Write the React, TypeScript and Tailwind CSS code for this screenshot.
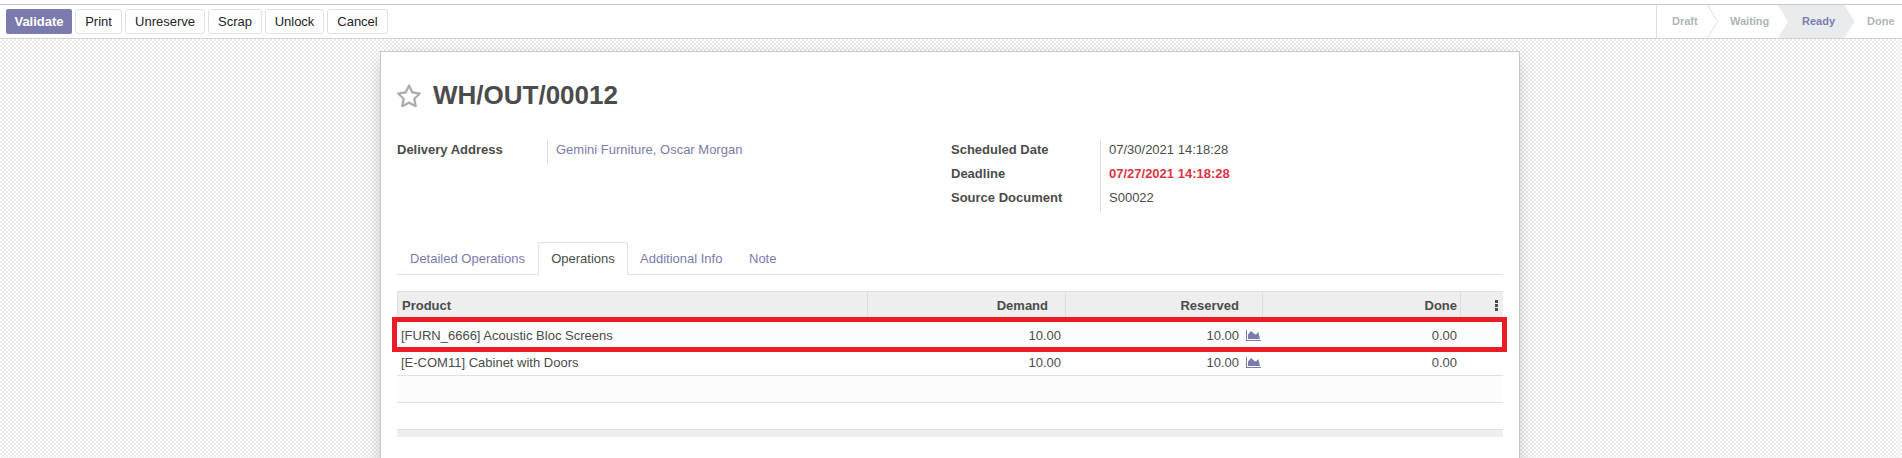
import React from "react";

const buttons = [
  { label: "Print", cls: "w-[47px]" },
  { label: "Unreserve", cls: "w-[80px]" },
  { label: "Scrap", cls: "w-[54px]" },
  { label: "Unlock", cls: "w-[59px]" },
  { label: "Cancel", cls: "w-[61px]" },
];

const rows = [
  { product: "[FURN_6666] Acoustic Bloc Screens", qty: "10.00", done: "0.00" },
  { product: "[E-COM11] Cabinet with Doors", qty: "10.00", done: "0.00" },
];

const columns = "grid grid-cols-[minmax(0,1fr)_198px_197px_198px_42px]";

function Star() {
  return (
    <svg width="24" height="23" viewBox="0 0 1664 1600" fill="#aaaaaa" className="shrink-0">
      <path
        d="M1137 1004l306-297-422-62-189-382-189 382-422 62 306 297-73 421 378-199 377 199zm527-357q0 22-26 48l-363 354 86 500q1 7 1 20 0 50-41 50-19 0-40-12l-449-236-449 236q-22 12-40 12-21 0-31.500-14.500t-10.500-35.500q0-6 2-20l86-500-364-354q-25-27-25-48 0-37 56-46l502-73 225-455q19-41 49-41t49 41l225 455 502 73q56 9 56 46z"
        stroke="#aaaaaa"
        strokeWidth="30"
      />
    </svg>
  );
}

function AreaChart() {
  return (
    <svg width="15" height="11" viewBox="0 0 15 11" className="shrink-0">
      <path d="M0 0h1v10h14v1H0z" fill="#7c7bad" />
      <path d="M2 9V4.500l3-3.500 3.500 3L10 4.500 12.300 2 14 9z" fill="#7c7bad" />
    </svg>
  );
}

function Status() {
  return (
    <div className="relative flex h-[33px] w-[246px] shrink-0 border-l border-[#dee2e6] text-[11px] font-bold leading-[33px] text-[#adb5bd]">
      <svg width="245" height="33" viewBox="0 0 245 33" className="absolute inset-0">
        <path d="M50.500 0L60.500 16.500 50.500 33" fill="none" stroke="#dee2e6" />
        <path d="M121 0H187.500L197.500 16.500 187.500 33H121L131 16.500z" fill="#e9ecef" />
      </svg>
      <span className="relative w-[57px] pl-[15px]">Draft</span>
      <span className="relative w-[72px] pl-4">Waiting</span>
      <span className="relative w-[65px] pl-4 text-[#7c7bad]">Ready</span>
      <span className="relative pl-4">Done</span>
    </div>
  );
}

export default function App() {
  return (
    <div className="flex h-[458px] w-[1902px] flex-col overflow-hidden bg-white font-['Liberation_Sans',Arial,sans-serif] text-[13px] text-[#4c4c4c]">
      <header className="mt-1 flex h-[35px] shrink-0 justify-between border-y border-t-[#c8c8c8] border-b-[#ced4da]">
        <div className="flex gap-[3px] pl-1.5 pt-1 text-[#212529]">
          <button className="h-[25px] w-[66px] rounded-[2px] bg-[#7c7bad] font-bold text-white">Validate</button>
          {buttons.map((b) => (
            <button key={b.label} className={`h-[25px] rounded-[3px] border border-[#dee2e6] bg-white ${b.cls}`}>
              {b.label}
            </button>
          ))}
        </div>
        <Status />
      </header>

      <main className="flex grow justify-center bg-[repeating-conic-gradient(#ececec_0_25%,#ffffff_0_50%)] bg-size-[4px_4px] pt-3 pr-[2px]">
        <section className="h-[440px] w-[1140px] shrink-0 border border-[#c8c8d3] bg-white px-4 shadow-[0_5px_20px_-5px_rgba(0,0,0,0.3)]">
          <div className="flex h-[88px] items-center pb-[2px]">
            <Star />
            <h1 className="ml-3 text-[26px] font-bold leading-8">WH/OUT/00012</h1>
          </div>

          <div className="flex h-[102px]">
            <div className="flex h-6 w-[554px] leading-[19px]">
              <div className="w-[150px] font-bold">Delivery Address</div>
              <div className="border-l border-[#dddddd] pl-2 text-[#7c7bad]">Gemini Furniture, Oscar Morgan</div>
            </div>
            <div className="flex h-[72px]">
              <div className="w-[149px] font-bold">
                <div className="h-6 leading-[19px]">Scheduled Date</div>
                <div className="h-6 leading-[19px]">Deadline</div>
                <div className="h-6 leading-[19px]">Source Document</div>
              </div>
              <div className="border-l border-[#dddddd] pl-2">
                <div className="h-6 leading-[19px]">07/30/2021 14:18:28</div>
                <div className="h-6 font-bold leading-[19px] text-[#dc3545]">07/27/2021 14:18:28</div>
                <div className="h-6 leading-[19px]">S00022</div>
              </div>
            </div>
          </div>

          <nav className="flex h-[33px] border-b border-[#dee2e6] leading-[33px] text-[#7c7bad]">
            <span className="w-[141px] pl-[13px]">Detailed Operations</span>
            <span className="h-[33px] w-[90px] rounded-t-[3px] border border-b-0 border-[#dee2e6] bg-white text-center leading-[31px] text-[#4c4c4c]">
              Operations
            </span>
            <span className="w-[121px] pl-3">Additional Info</span>
            <span>Note</span>
          </nav>

          <div className="relative mt-4">
            <div className={`${columns} h-[29px] border-t border-l border-[#dee2e6] bg-[#eeeeee] font-bold leading-[28px]`}>
              <div className="border-r border-[#dcdde2] pl-1">Product</div>
              <div className="border-r border-[#dcdde2] pr-[17px] text-right">Demand</div>
              <div className="border-r border-[#dcdde2] pr-[23px] text-right">Reserved</div>
              <div className="border-r border-[#dcdde2] pr-[3px] text-right">Done</div>
              <div className="flex flex-col items-end gap-px pr-[5px] pt-2">
                <i className="size-[3px] bg-[#4c4c4c]" />
                <i className="size-[3px] bg-[#4c4c4c]" />
                <i className="size-[3px] bg-[#4c4c4c]" />
              </div>
            </div>
            {rows.map((r, i) => (
              <div
                key={r.product}
                className={`${columns} border-b border-[#dee2e6] ${i === 0 ? "h-[29px] bg-[#fcfcfc] pt-px leading-[29px]" : "h-[27px] leading-[27px]"}`}
              >
                <div className="pl-1">{r.product}</div>
                <div className="pr-[5px] text-right">{r.qty}</div>
                <div className="flex items-center justify-end gap-[7px] pr-[2px]">
                  {r.qty}
                  <AreaChart />
                </div>
                <div className="pr-1 text-right">{r.done}</div>
              </div>
            ))}
            <div className="h-[27px] border-b border-[#dee2e6] bg-[#fcfcfc]" />
            <div className="h-[27px] border-b border-[#dee2e6]" />
            <div className="h-[7px] bg-[#eeeeee]" />
            <div className="absolute -left-[5px] top-[26px] h-[35px] w-[1115px] border-5 border-[#ed1c24]" />
          </div>
        </section>
      </main>
    </div>
  );
}
